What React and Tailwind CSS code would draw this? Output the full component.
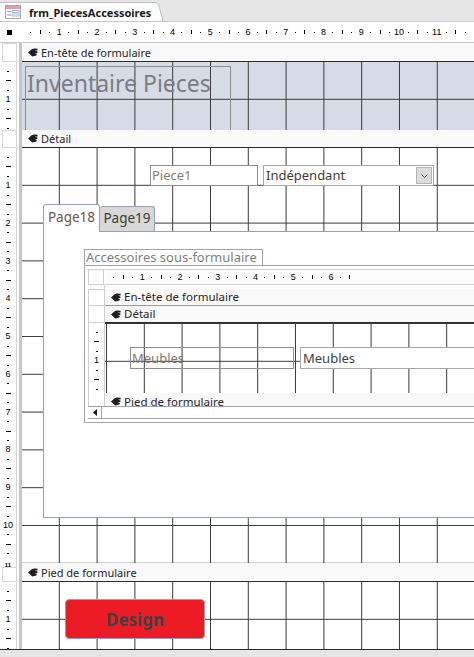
import React from "react";

const GRID =
  "bg-[linear-gradient(to_right,transparent_36.8px,#3a3a3a_36.8px),linear-gradient(to_bottom,transparent_36.8px,#3a3a3a_36.8px)] bg-[length:37.8px_37.8px] bg-size-[37.8px_37.8px]";

function Hand() {
  return (
    <svg width="10" height="9" viewBox="0 0 10 9" className="shrink-0">
      <path
        d="M0 4.6 L3.6 1.2 L6 0.6 L9.6 0.8 L9.6 2.4 L6.6 2.6 L9.4 3.4 L9.4 5 L6.8 5.2 L8.8 6 L8.4 7.6 L4.2 8.4 Z"
        fill="#1f1f1f"
      />
    </svg>
  );
}

function FormIcon() {
  return (
    <svg width="16" height="14" viewBox="0 0 16 14" className="shrink-0">
      <rect x="0.5" y="0.5" width="15" height="13" fill="#fff" stroke="#a8a8a8" />
      <rect x="1" y="1" width="14" height="3" fill="#e79aae" />
      <rect x="2" y="6" width="4" height="1" fill="#7d9cc4" />
      <rect x="7" y="5.5" width="7" height="2" fill="#fff" stroke="#8fa8cc" strokeWidth="0.8" />
      <rect x="2" y="9.5" width="4" height="1" fill="#7d9cc4" />
      <rect x="7" y="9" width="7" height="2" fill="#fff" stroke="#8fa8cc" strokeWidth="0.8" />
    </svg>
  );
}

function HRuler({ n, lead }) {
  const items = Array.from({ length: n }, (_, i) => i + 1);
  return (
    <div className="flex h-full items-center">
      <div className={`${lead} shrink-0`} />
      {items.map((k) => (
        <div key={k} className="flex h-full w-[9.45px] shrink-0 items-center justify-center">
          {k % 4 === 0 ? (
            <span className="font-['Liberation_Sans',sans-serif] text-[9px] leading-none text-black">{k / 4}</span>
          ) : k % 2 === 0 ? (
            <span className="h-[4px] w-px bg-black" />
          ) : (
            <span className="h-px w-px bg-black" />
          )}
        </div>
      ))}
    </div>
  );
}

function VRuler({ n }) {
  const items = Array.from({ length: n }, (_, i) => i + 1);
  return (
    <div className="flex flex-col items-center">
      <div className="h-[4.7px] shrink-0" />
      {items.map((k) => (
        <div key={k} className="flex h-[9.45px] w-full shrink-0 items-center justify-center">
          {k % 4 === 0 ? (
            <span className="font-['Liberation_Sans',sans-serif] text-[9px] leading-none text-black">{k / 4}</span>
          ) : k % 2 === 0 ? (
            <span className="h-px w-[5px] bg-black" />
          ) : (
            <span className="h-px w-[2px] bg-black" />
          )}
        </div>
      ))}
    </div>
  );
}

function LeftCell({ children, box, topLabel }) {
  return (
    <div className="flex w-[22px] shrink-0 bg-white">
      <div className="flex w-[17px] shrink-0 flex-col overflow-hidden border-r border-[#d6d6d6]">
        {topLabel ? (
          <span className="flex h-[4px] shrink-0 items-center justify-center font-['Liberation_Sans',sans-serif] text-[6px] font-bold leading-none text-black">
            {topLabel}
          </span>
        ) : null}
        {box ? <div className="ml-[2px] flex-1 border border-r-0 border-[#d6d6d6]" /> : children}
      </div>
      <div className="w-[2px] shrink-0" />
      <div className="w-[3px] shrink-0 bg-[#c6c6c6]" />
    </div>
  );
}

function SectionBar({ label }) {
  return (
    <div className="flex min-w-0 flex-1 items-center gap-[3px] border-b border-[#2c2c2c] bg-[#f9f9f9] pl-[6px] text-[11px] text-[#262626]">
      <Hand />
      <span className="leading-none">{label}</span>
    </div>
  );
}

function SubForm() {
  return (
    <div className="flex h-[158px] w-[420px] flex-col border border-[#a3a3a3] bg-white p-[3px] pr-0">
      <div className="flex min-h-0 flex-1 flex-col overflow-hidden">
        {/* ruler row */}
        <div className="flex h-[16px] shrink-0">
          <div className="w-[16px] shrink-0 border border-[#cfcfcf]" />
          <div className="ml-px flex-1 border-b border-t border-[#cfcfcf] bg-[#fdfdfd]">
            <HRuler n={26} lead="w-[4.2px]" />
          </div>
        </div>
        <div className="flex h-[4px] shrink-0">
          <div className="w-[17px] shrink-0 border-r border-[#cfcfcf]" />
        </div>
        <div className="flex h-[17px] shrink-0">
          <div className="w-[17px] shrink-0 border border-[#cfcfcf]" />
          <div className="flex flex-1 items-center gap-[3px] border-b border-[#9a9a9a] bg-[#f9f9f9] pl-[6px] text-[11.5px] text-[#262626]">
            <Hand />
            <span className="leading-none">En-tête de formulaire</span>
          </div>
        </div>
        <div className="flex h-[17px] shrink-0">
          <div className="w-[17px] shrink-0 border border-t-0 border-[#cfcfcf]" />
          <div className="flex flex-1 items-center gap-[3px] border-b border-[#2c2c2c] bg-[#f9f9f9] pl-[6px] text-[11.5px] text-[#262626]">
            <Hand />
            <span className="leading-none">Détail</span>
          </div>
        </div>
        <div className="flex h-[70px] shrink-0">
          <div className="w-[17px] shrink-0 overflow-hidden border-r border-l border-[#cfcfcf]">
            <VRuler n={7} />
          </div>
          <div className={`flex flex-1 items-start bg-white ${GRID} bg-[position:2px_1px] pt-[24px] pl-[25px]`}>
            <div className="flex h-[22px] w-[164px] shrink-0 items-center border border-[#8f8f8f] pl-[1px] text-[13px] leading-none text-[#85786b]">
              Meubles
            </div>
            <div className="ml-[6px] flex h-[22px] w-[200px] shrink-0 items-center border border-[#a6a6a6] bg-white pl-[2px] text-[13px] leading-none text-[#3f3f3f]">
              Meubles
            </div>
          </div>
        </div>
        <div className="flex h-[13px] shrink-0">
          <div className="w-[17px] shrink-0 border-l border-r border-[#cfcfcf]" />
          <div className="flex flex-1 items-center gap-[3px] bg-[#f9f9f9] pl-[6px] pt-[4px] text-[11.5px] text-[#262626]">
            <Hand />
            <span className="leading-none">Pied de formulaire</span>
          </div>
        </div>
        <div className="flex h-[13px] shrink-0 border-b border-t border-[#a3a3a3] bg-white">
          <div className="flex w-[14px] shrink-0 items-center justify-center border-r border-[#a3a3a3]">
            <svg width="4" height="7" viewBox="0 0 4 7">
              <path d="M4 0 L0 3.5 L4 7 Z" fill="#1a1a1a" />
            </svg>
          </div>
        </div>
      </div>
    </div>
  );
}

export default function App() {
  return (
    <div className="flex h-[657px] w-[474px] flex-col overflow-hidden bg-[#e6e6e6] font-['Noto_Sans',sans-serif]">
      {/* document tab bar */}
      <div className="flex h-[21px] shrink-0 items-end bg-[#e6e6e6]">
        <div className="flex h-[19px] items-center gap-[8px] border-t border-[#c3c3c3] bg-white pl-[5px] pr-[2px]">
          <FormIcon />
          <span className="text-[11px] font-bold leading-none text-[#1a1a1a]">frm_PiecesAccessoires</span>
        </div>
        <svg width="12" height="19" viewBox="0 0 12 19" className="shrink-0">
          <path d="M0 0.5 L2 0.5 C4 0.5 5 1.5 6 4 L10 19 L0 19 Z" fill="#fff" />
          <path d="M0 0.5 L2 0.5 C4 0.5 5 1.5 6 4 L10 19" fill="none" stroke="#b9b9b9" />
        </svg>
      </div>

      {/* horizontal ruler */}
      <div className="flex h-[22px] shrink-0 border-b border-t border-[#c9c9c9] bg-white">
        <div className="flex w-[22px] shrink-0 items-center">
          <span className="ml-[7px] h-[5px] w-[5px] bg-black" />
        </div>
        <div className="min-w-0 flex-1 overflow-hidden">
          <HRuler n={47} lead="w-[4.2px]" />
        </div>
      </div>

      {/* header bar */}
      <div className="flex h-[19px] shrink-0">
        <LeftCell box />
        <SectionBar label="En-tête de formulaire" />
      </div>
      {/* header content */}
      <div className="flex h-[68px] shrink-0">
        <LeftCell>
          <VRuler n={7} />
        </LeftCell>
        <div className={`min-w-0 flex-1 overflow-hidden bg-[#d6dce5] ${GRID} pl-[3px] pt-[4px]`}>
          <div className="h-[70px] w-[206px] whitespace-nowrap border border-[#8c8c8c] pl-px pt-[2px] text-[23px] leading-[28px] text-[#7b7d82]">
            Inventaire Pieces
          </div>
        </div>
      </div>

      {/* detail bar */}
      <div className="flex h-[18px] shrink-0">
        <LeftCell box />
        <SectionBar label="Détail" />
      </div>
      {/* detail content */}
      <div className="flex h-[415px] shrink-0">
        <LeftCell>
          <VRuler n={43} />
        </LeftCell>
        <div className={`flex min-w-0 flex-1 flex-col overflow-hidden bg-white ${GRID} pt-[17px]`}>
          <div className="ml-[128px] flex gap-[5px]">
            <div className="flex h-[21px] w-[108px] shrink-0 items-center border border-[#8f8f8f] bg-white pl-px text-[13px] leading-none text-[#8a7c6f]">
              Piece1
            </div>
            <div className="flex h-[21px] w-[171px] shrink-0 items-center justify-between border border-[#a6a6a6] bg-white pl-[2px] pr-px">
              <span className="text-[13px] leading-none text-[#3f3a35]">Indépendant</span>
              <span className="flex h-[17px] w-[16px] items-center justify-center border border-[#b4b4b4] bg-[#dcdcdc]">
                <svg width="7" height="4" viewBox="0 0 7 4">
                  <path d="M0.5 0.5 L3.5 3.5 L6.5 0.5" fill="none" stroke="#555" strokeWidth="1" />
                </svg>
              </span>
            </div>
          </div>

          {/* tab control */}
          <div className="ml-[21px] mt-[18px] flex flex-col">
            <div className="flex h-[27px] items-end">
              <div className="relative z-10 -mb-px flex h-[28px] w-[57px] items-center justify-center rounded-t-[3px] border border-b-0 border-[#8ea3bd] bg-white pb-[2px] text-[13.5px] leading-none text-[#6a5646]">
                Page18
              </div>
              <div className="flex h-[25px] w-[55px] items-center justify-center rounded-t-[3px] border border-b-0 border-l-0 border-[#8ea3bd] bg-[#d8d8d8] text-[13.5px] leading-none text-[#403a35]">
                Page19
              </div>
            </div>
            <div className="flex h-[287px] w-[460px] flex-col border border-r-0 border-[#8ea3bd] bg-white pl-[40px] pt-[17px]">
              <div className="flex h-[16px] w-[179px] items-center whitespace-nowrap border border-b-0 border-[#a3a3a3] pl-px text-[13px] leading-none text-[#7f7f7f]">
                Accessoires sous-formulaire
              </div>
              <SubForm />
            </div>
          </div>
        </div>
      </div>

      {/* footer bar */}
      <div className="flex h-[19px] shrink-0">
        <LeftCell box topLabel="11" />
        <SectionBar label="Pied de formulaire" />
      </div>
      {/* footer content */}
      <div className="flex h-[68px] shrink-0 border-b border-[#2c2c2c]">
        <LeftCell>
          <VRuler n={7} />
        </LeftCell>
        <div className={`min-w-0 flex-1 overflow-hidden bg-white ${GRID} pl-[43px] pt-[17px]`}>
          <div className="flex h-[40px] w-[140px] items-center justify-center rounded-[4px] border border-[#8aa4c6] bg-[#ed1c24] text-[17px] font-bold leading-none text-[#404040]">
            Design
          </div>
        </div>
      </div>
      <div className="flex-1 bg-[#e6e6e6]" />
    </div>
  );
}
